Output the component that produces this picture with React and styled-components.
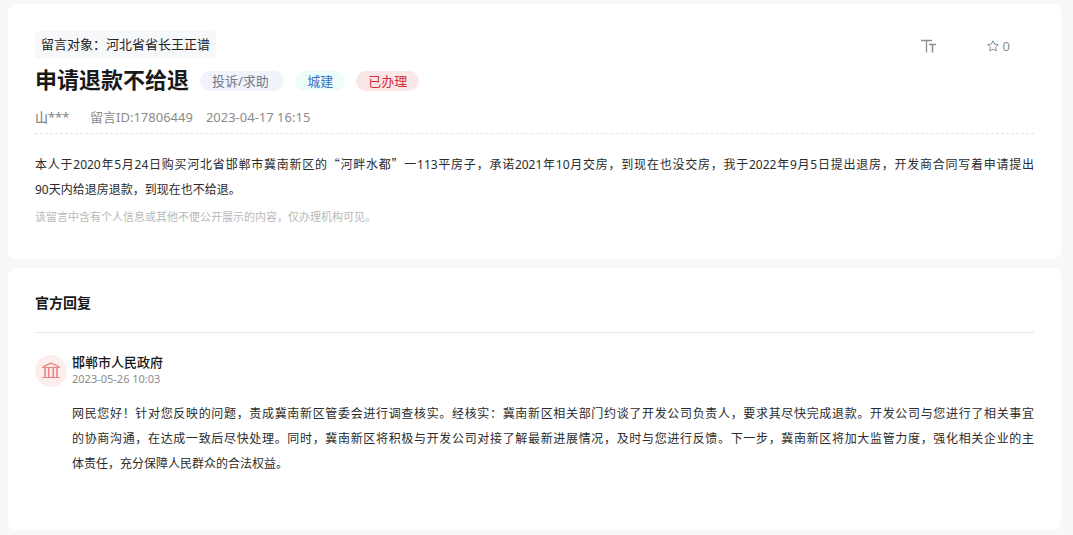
import React from 'react';
import styled, { createGlobalStyle } from 'styled-components';

const GlobalStyle = createGlobalStyle`
  * {
    box-sizing: border-box;
  }
  body {
    margin: 0;
    background: #f7f8fa;
    color: #222;
    font-family: "Noto Sans", "Noto Sans CJK SC", sans-serif;
    font-size: 13px;
  }
  h1, h2, h3, p {
    margin: 0;
  }
`;

const Page = styled.main`
  display: flex;
  flex-direction: column;
  gap: 9px;
  padding: 4px 12px 5px 8px;
`;

const Card = styled.section`
  padding: 27px 27px ${(props) => props.$bottom}px;
  background: #fff;
  border-radius: 8px;
`;

const TopBar = styled.div`
  display: flex;
  justify-content: space-between;
  align-items: center;
`;

const Target = styled.div`
  padding: 0 6px;
  background: #f7f8fa;
  border-radius: 2px;
  line-height: 27px;
`;

const Actions = styled.div`
  display: flex;
  align-items: center;
  gap: 50px;
  padding: 2px 24px 0 0;
`;

const IconButton = styled.button`
  display: flex;
  align-items: center;
  gap: 4px;
  padding: 0;
  border: 0;
  background: none;
  color: #8b8f96;
  font: inherit;
  line-height: 20px;
  cursor: pointer;
`;

const TitleRow = styled.div`
  display: flex;
  align-items: center;
  gap: 11px;
  padding-top: 7px;
`;

const Title = styled.h1`
  padding-bottom: 4px;
  color: #191919;
  font-size: 22px;
  font-weight: 700;
  line-height: 28px;
`;

const tones = {
  gray: { bg: '#f0f3f9', color: '#6f7b8c' },
  green: { bg: '#ecfdfa', color: '#3a74c4' },
  red: { bg: '#fae8e9', color: '#d42a3c' },
};

const Tag = styled.span`
  padding: 0 12px;
  border-radius: 10px;
  background: ${(props) => tones[props.$tone].bg};
  color: ${(props) => tones[props.$tone].color};
  line-height: 20px;
`;

const Meta = styled.div`
  display: flex;
  gap: 13px;
  padding: 10px 0 6px;
  border-bottom: 1px dashed #e3e4e6;
  color: #8c8c8c;
  line-height: 20px;
`;

const Author = styled.span`
  min-width: 42px;
  font-weight: 500;
`;

const Paragraph = styled.p`
  padding-top: ${(props) => props.$top}px;
  color: #2b2b2b;
  font-size: 12px;
  line-height: 25px;
`;

const Line = styled.span`
  display: block;
  text-align: justify;
  text-align-last: justify;

  &:last-child {
    text-align-last: left;
  }
`;

// full-width quotation marks
const Quote = styled.span`
  font-family: "Noto Sans CJK SC", sans-serif;
  line-height: 1;
`;

const Hint = styled.p`
  padding-top: 5px;
  color: #b9b9b9;
  font-size: 11px;
  line-height: 20px;
`;

const SectionTitle = styled.h2`
  padding-bottom: 21px;
  border-bottom: 1px solid #e5e5e5;
  color: #191919;
  font-size: 14px;
  font-weight: 700;
  line-height: 16px;
`;

const Reply = styled.article`
  display: grid;
  grid-template-columns: 32px 1fr;
  column-gap: 5px;
  padding-top: 20px;
`;

const Avatar = styled.div`
  display: flex;
  align-items: center;
  justify-content: center;
  width: 32px;
  height: 32px;
  margin-top: 2px;
  border-radius: 50%;
  background: #fdeeee;
`;

const ReplyName = styled.h3`
  color: #191919;
  font-size: 13px;
  font-weight: 500;
  line-height: 18px;
`;

const ReplyTime = styled.time`
  display: block;
  color: #8c8c8c;
  font-size: 11px;
  line-height: 16px;
`;

const ReplyBody = styled.div`
  grid-column: 2;
`;

const FontSizeIcon = () => (
  <svg width="16" height="16" viewBox="0 0 16 16" fill="none" stroke="currentColor" aria-hidden="true">
    <path d="M0 2.5h11M5.5 2.5v12" strokeWidth="1.3" />
    <path d="M8 6.5h7M11.5 6.5v8" strokeWidth="1.6" />
  </svg>
);

const StarIcon = () => (
  <svg width="12" height="12" viewBox="0 0 12 12" fill="none" stroke="currentColor" strokeLinejoin="round" aria-hidden="true">
    <path d="M6 .8l1.6 3.3 3.7.5-2.7 2.6.7 3.7L6 9.2l-3.3 1.7.7-3.7L.7 4.6l3.7-.5z" />
  </svg>
);

const GovernmentIcon = () => (
  <svg width="18" height="18" viewBox="0 0 18 18" fill="none" stroke="#e88482" aria-hidden="true">
    <path d="M1 4.6L9 1.1l8 3.5" strokeWidth="1.3" />
    <path d="M0 5.5h18M0 15.5h18" strokeWidth="1.2" />
    <path d="M3 6v9M6.7 6v9M11.3 6v9M15 6v9" strokeWidth="1.6" />
  </svg>
);

const messageLines = [
  '本人于2020年5月24日购买河北省邯郸市冀南新区的“河畔水都”一113平房子，承诺2021年10月交房，到现在也没交房，我于2022年9月5日提出退房，开发商合同写着申请提出',
  '90天内给退房退款，到现在也不给退。',
];

const replyLines = [
  '网民您好！针对您反映的问题，责成冀南新区管委会进行调查核实。经核实：冀南新区相关部门约谈了开发公司负责人，要求其尽快完成退款。开发公司与您进行了相关事宜',
  '的协商沟通，在达成一致后尽快处理。同时，冀南新区将积极与开发公司对接了解最新进展情况，及时与您进行反馈。下一步，冀南新区将加大监管力度，强化相关企业的主',
  '体责任，充分保障人民群众的合法权益。',
];

const renderQuotes = (line) =>
  line.split(/([“”])/).map((part, index) => (index % 2 ? <Quote key={index}>{part}</Quote> : part));

const App = () => {
  return (
    <>
      <GlobalStyle />
      <Page lang="zh-CN">
        <Card $bottom={32}>
          <TopBar>
            <Target>留言对象：河北省省长王正谱</Target>
            <Actions>
              <IconButton type="button" aria-label="字号">
                <FontSizeIcon />
              </IconButton>
              <IconButton type="button">
                <StarIcon />0
              </IconButton>
            </Actions>
          </TopBar>
          <TitleRow>
            <Title>申请退款不给退</Title>
            <Tag $tone="gray">投诉/求助&nbsp;</Tag>
            <Tag $tone="green">城建</Tag>
            <Tag $tone="red">已办理</Tag>
          </TitleRow>
          <Meta>
            <Author>山***</Author>
            <span>留言ID:17806449</span>
            <time>2023-04-17 16:15</time>
          </Meta>
          <Paragraph $top={18}>
            {messageLines.map((line) => (
              <Line key={line}>{renderQuotes(line)}</Line>
            ))}
          </Paragraph>
          <Hint>该留言中含有个人信息或其他不便公开展示的内容，仅办理机构可见。</Hint>
        </Card>
        <Card $bottom={54}>
          <SectionTitle>官方回复</SectionTitle>
          <Reply>
            <Avatar>
              <GovernmentIcon />
            </Avatar>
            <div>
              <ReplyName>邯郸市人民政府</ReplyName>
              <ReplyTime>2023-05-26 10:03</ReplyTime>
            </div>
            <ReplyBody>
              <Paragraph $top={14}>
                {replyLines.map((line) => (
                  <Line key={line}>{line}</Line>
                ))}
              </Paragraph>
            </ReplyBody>
          </Reply>
        </Card>
      </Page>
    </>
  );
};

export default App;
